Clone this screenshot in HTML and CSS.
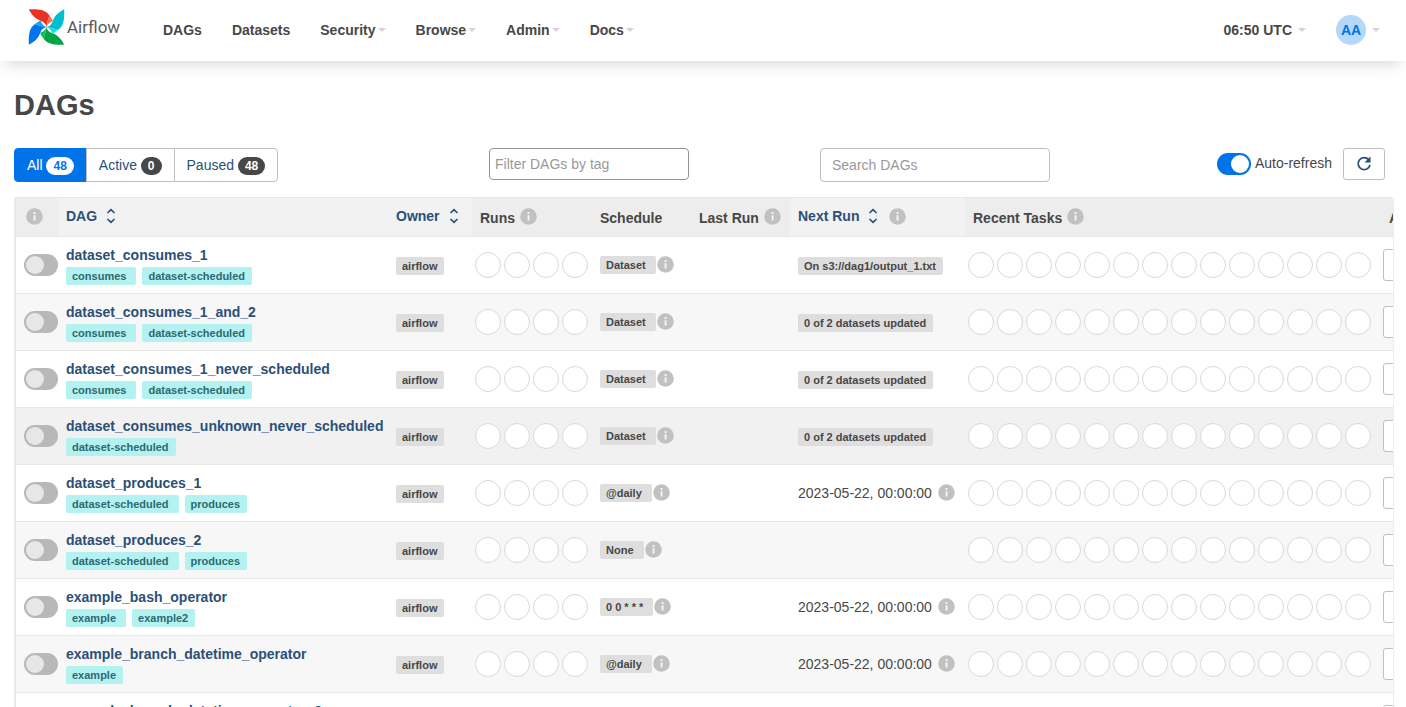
FILE: index.html
```
<!DOCTYPE html>
<html lang="en">
<head>
    <meta charset="UTF-8">
    <meta name="viewport" content="width=device-width, initial-scale=1.0">
    <title>DAGs - Airflow</title>
    <link rel="stylesheet" href="styles.css">
</head>
<body>
    <svg class="sprite" aria-hidden="true">
        <symbol id="icon-info" viewBox="0 0 17 17">
            <circle cx="8.5" cy="8.5" r="8.3" fill="#c1c1c1"/>
            <path d="M7.6 4h1.9v1.9H7.6zM7.6 7.2h1.9v5.4H7.6z" fill="#fff" opacity=".85"/>
        </symbol>
        <symbol id="icon-sort" viewBox="0 0 10 16">
            <path d="M1.5 5 5 1.6 8.5 5M1.5 11 5 14.4 8.5 11" fill="none" stroke="currentColor" stroke-width="1.7"/>
        </symbol>
    </svg>

    <header class="navbar">
        <a class="brand" href="#">
            <svg class="brand-logo" viewBox="0 0 36 36" aria-hidden="true">
                <defs>
                    <path id="blade" d="M.3.3C10 .1 17 .5 21 6.500 19.500 10 18.500 14 18 18 17.500 15 15.500 12.700 12 11.700 6.500 9.500 3.500 6.500.3.300z"/>
                    <path id="fold" d="M21 6.500C23 9 24 10.500 24.300 12.200 21 13.500 19 15 18 18 18.500 14 19.500 10 21 6.500z"/>
                </defs>
                <use href="#blade" fill="#e93124"/>
                <use href="#fold" fill="#ff7557"/>
                <use href="#blade" fill="#00bfcc" transform="rotate(90 18 18)"/>
                <use href="#fold" fill="#11dfec" transform="rotate(90 18 18)"/>
                <use href="#blade" fill="#04a346" transform="rotate(180 18 18)"/>
                <use href="#fold" fill="#00c45b" transform="rotate(180 18 18)"/>
                <use href="#blade" fill="#0073f0" transform="rotate(270 18 18)"/>
                <use href="#fold" fill="#16a3ff" transform="rotate(270 18 18)"/>
            </svg>
            <span class="brand-name">Airflow</span>
        </a>
        <nav class="menu">
            <a href="#">DAGs</a>
            <a href="#">Datasets</a>
            <a href="#">Security<b class="caret"></b></a>
            <a href="#">Browse<b class="caret"></b></a>
            <a href="#">Admin<b class="caret"></b></a>
            <a href="#">Docs<b class="caret"></b></a>
        </nav>
        <div class="menu menu-right">
            <a class="spaced" href="#">06:50 UTC<b class="caret"></b></a>
            <a class="spaced" href="#"><span class="avatar">AA</span><b class="caret"></b></a>
        </div>
    </header>

    <main>
        <h2>DAGs</h2>

        <div class="toolbar">
            <div class="status-group">
                <a class="active" href="#">All <span class="badge">48</span></a>
                <a href="#">Active <span class="badge">0</span></a>
                <a href="#">Paused <span class="badge">48</span></a>
            </div>
            <div>
                <input class="field tag-field" type="text" placeholder="Filter DAGs by tag" aria-label="Filter DAGs by tag">
            </div>
            <div class="toolbar-end">
                <input class="field search-field" type="search" placeholder="Search DAGs" aria-label="Search DAGs">
                <div class="refresh">
                    <input class="switch" type="checkbox" id="auto_refresh" checked>
                    <label for="auto_refresh">Auto-refresh</label>
                    <button class="refresh-button" type="button" aria-label="Refresh">
                        <svg width="16" height="16" viewBox="0 0 16 16" aria-hidden="true">
                            <path d="M12.700 3.700A6 6 0 1 0 14 9" fill="none" stroke="currentColor" stroke-width="1.800"/>
                            <path d="M14.500.500v6H8.500z" fill="currentColor"/>
                        </svg>
                    </button>
                </div>
            </div>
        </div>

        <div class="table-wrap">
            <table>
                <colgroup>
                    <col class="col-toggle"><col class="col-dag"><col class="col-owner">
                    <col class="col-runs"><col class="col-schedule"><col class="col-last">
                    <col class="col-next"><col class="col-tasks"><col class="col-actions">
                </colgroup>
                <thead>
                    <tr>
                        <th><div class="head toggle-head"><svg class="info"><use href="#icon-info"/></svg></div></th>
                        <th class="sortable"><div class="head"><a href="#">DAG<svg class="sort"><use href="#icon-sort"/></svg></a></div></th>
                        <th class="sortable"><div class="head"><a href="#">Owner<svg class="sort"><use href="#icon-sort"/></svg></a></div></th>
                        <th><div class="head"><span>Runs</span><svg class="info"><use href="#icon-info"/></svg></div></th>
                        <th><div class="head"><span>Schedule</span></div></th>
                        <th><div class="head"><span>Last Run</span><svg class="info"><use href="#icon-info"/></svg></div></th>
                        <th class="sortable"><div class="head"><a href="#">Next Run<svg class="sort"><use href="#icon-sort"/></svg></a><svg class="info"><use href="#icon-info"/></svg></div></th>
                        <th><div class="head"><span>Recent Tasks</span><svg class="info"><use href="#icon-info"/></svg></div></th>
                        <th class="actions-head"><div class="head"><span>Actions</span></div></th>
                    </tr>
                </thead>
                <tbody id="dags"></tbody>
            </table>
        </div>
    </main>
    <script src="dags.js"></script>
</body>
</html>
```
FILE: styles.css
```
* {
    box-sizing: border-box;
}

body {
    margin: 0;
    background: #fff;
    color: #474747;
    font-family: "Liberation Sans", Helvetica, Arial, sans-serif;
    font-size: 14px;
    line-height: 20px;
    overflow-x: hidden;
}

a {
    color: #2b5078;
    text-decoration: none;
}

.sprite {
    display: none;
}

/* Navbar */
.navbar {
    display: flex;
    height: 61px;
    padding: 0 26px 0 28px;
    background: #fff;
    box-shadow: 0 8px 16px -6px rgba(0, 0, 0, 0.18);
}

.brand {
    display: flex;
    align-items: center;
    gap: 2px;
    height: 54px;
    margin-right: 26px;
}

.brand-logo {
    width: 37px;
    height: 36px;
}

.brand-name {
    width: 55px;
    color: #5a5a5a;
    font-family: Roboto, sans-serif;
    font-size: 17px;
}

.menu {
    display: flex;
    height: 59px;
}

.menu a {
    display: flex;
    align-items: center;
    gap: 2px;
    padding: 0 15px;
    color: #474747;
    font-weight: bold;
}

.menu-right {
    margin-left: auto;
}

.menu-right a:last-child {
    padding-right: 0;
}

.menu .spaced {
    gap: 6px;
}

.caret {
    border-top: 4px solid #ddd0dd;
    border-left: 4px solid transparent;
    border-right: 4px solid transparent;
}

.avatar {
    width: 30px;
    height: 30px;
    border-radius: 50%;
    background: #b3d8f8;
    color: #0073e9;
    line-height: 30px;
    text-align: center;
}

/* Page */
main {
    padding: 0 12px 0 14px;
}

h2 {
    margin: 28px 0 26px;
    font-size: 29px;
    font-weight: bold;
    line-height: 33px;
}

.toolbar {
    display: grid;
    grid-template-columns: 475fr 331fr 565fr;
    align-items: start;
    margin: 0 9px 15px 0;
}

.toolbar-end {
    display: flex;
    justify-content: space-between;
}

.status-group {
    display: flex;
}

.status-group a {
    height: 34px;
    margin-left: -1px;
    padding: 6px 12px;
    border: 1px solid #bfbfbf;
    background: #fff;
}

.status-group a:first-child {
    margin-left: 0;
    border-radius: 4px 0 0 4px;
}

.status-group a:last-child {
    border-radius: 0 4px 4px 0;
}

.status-group .active {
    border-color: #0073e9;
    background: #0073e9;
    color: #fff;
}

.badge {
    display: inline-block;
    padding: 3px 7px;
    border-radius: 10px;
    background: #474747;
    color: #fff;
    font-size: 12px;
    font-weight: bold;
    line-height: 12px;
    vertical-align: middle;
}

.active .badge {
    background: #fff;
    color: #0073e9;
}

.field {
    border: 1px solid #bfbfbf;
    border-radius: 4px;
    background: #fff;
    color: #474747;
    font: inherit;
    appearance: none;
}

.field::placeholder {
    color: #999;
    opacity: 1;
}

.tag-field {
    width: 200px;
    height: 32px;
    padding: 0 5px;
    border-color: #949494;
}

.search-field {
    width: 230px;
    height: 34px;
    padding: 0 11px;
}

.refresh {
    display: flex;
    align-items: center;
    height: 32px;
}

.refresh label {
    margin: 0 11px 2px 4px;
}

.refresh-button {
    display: flex;
    align-items: center;
    justify-content: center;
    width: 42px;
    height: 32px;
    padding: 0;
    border: 1px solid #bfbfbf;
    border-radius: 3px;
    background: #fff;
    color: #2b5078;
}

.switch {
    display: block;
    width: 34px;
    height: 22px;
    margin: 0;
    padding: 2px;
    border-radius: 11px;
    background: #b9b8b8;
    appearance: none;
}

.switch::before {
    display: block;
    width: 18px;
    height: 18px;
    border-radius: 50%;
    background: #e8e6e8;
    content: "";
}

.switch:checked {
    background: #0073e9;
}

.switch:checked::before {
    margin-left: auto;
    background: #fff;
}

/* DAG table */
.table-wrap {
    overflow: hidden;
    border-left: 2px solid #e8e8e8;
    border-right: 1px solid #eee;
    border-radius: 3px 3px 0 0;
}

table {
    width: 1459px;
    border-collapse: separate;
    border-spacing: 0;
    table-layout: fixed;
}

.col-toggle { width: 42px; }
.col-dag { width: 330px; }
.col-owner { width: 84px; }
.col-runs { width: 120px; }
.col-schedule { width: 99px; }
.col-last { width: 99px; }
.col-next { width: 175px; }
.col-tasks { width: 410px; }
.col-actions { width: 100px; }

th {
    height: 40px;
    padding: 0 8px 2px;
    border-top: 1px solid #e8e8e8;
    border-bottom: 1px solid #e8e8e8;
    background: #ededed;
    text-align: left;
}

.sortable {
    background: #f2f2f2;
}

.actions-head {
    padding-left: 14px;
}

.head,
.head a {
    display: flex;
    align-items: center;
    white-space: nowrap;
}

.head {
    gap: 5px;
    height: 24px;
}

.toggle-head {
    justify-content: center;
    padding-right: 6px;
}

.head span {
    padding-top: 3px;
}

.head a + .info {
    margin-left: 6px;
}

.sort {
    width: 10px;
    height: 16px;
    margin-left: 9px;
}

.info {
    display: block;
    flex: none;
    width: 17px;
    height: 17px;
}

td {
    height: 57px;
    padding: 8px;
    border-bottom: 1px solid #e8e8e8;
    vertical-align: middle;
}

tbody tr:nth-child(even) {
    background: #f7f7f7;
}

tbody .hovered {
    background: #f1f1f1 !important;
}

.dag-name {
    display: block;
    font-weight: bold;
    white-space: nowrap;
}

.tags {
    display: flex;
    gap: 6px;
    margin-top: 2px;
}

.label {
    display: inline-block;
    padding: 0 7px 0 6px;
    border-radius: 2px;
    background: #dedede;
    color: #474747;
    font-size: 11px;
    font-weight: bold;
    line-height: 18px;
    white-space: nowrap;
}

.tag {
    background: #b4f1f1;
    color: #2c6a70;
}

.tag:not(:last-child),
.schedule .label {
    padding-right: 10px;
}

.schedule,
.next-run {
    display: flex;
    align-items: center;
    gap: 1px;
    padding-bottom: 1px;
    white-space: nowrap;
}

.next-run {
    gap: 6px;
}

.circles-cell {
    padding: 8px 3px;
}

.circles {
    display: flex;
    gap: 3px;
}

.circles span {
    flex: none;
    width: 26px;
    height: 26px;
    border: 1px solid #d9d9d9;
    border-radius: 50%;
    background: #fff;
}

.actions {
    display: flex;
}

.actions button {
    display: flex;
    align-items: center;
    justify-content: center;
    width: 42px;
    height: 32px;
    padding: 0;
    border: 1px solid #bfbfbf;
    border-radius: 3px 0 0 3px;
    background: #fff;
    color: #2b5078;
}

.actions button + button {
    margin-left: -1px;
    border-radius: 0 3px 3px 0;
}
```
FILE: dags.js
```
const dags = [
    { name: 'dataset_consumes_1', tags: ['consumes', 'dataset-scheduled'], schedule: 'Dataset', next: 'On s3://dag1/output_1.txt' },
    { name: 'dataset_consumes_1_and_2', tags: ['consumes', 'dataset-scheduled'], schedule: 'Dataset', next: '0 of 2 datasets updated' },
    { name: 'dataset_consumes_1_never_scheduled', tags: ['consumes', 'dataset-scheduled'], schedule: 'Dataset', next: '0 of 2 datasets updated' },
    { name: 'dataset_consumes_unknown_never_scheduled', tags: ['dataset-scheduled'], schedule: 'Dataset', next: '0 of 2 datasets updated', hovered: true },
    { name: 'dataset_produces_1', tags: ['dataset-scheduled', 'produces'], schedule: '@daily', date: '2023-05-22, 00:00:00' },
    { name: 'dataset_produces_2', tags: ['dataset-scheduled', 'produces'], schedule: 'None' },
    { name: 'example_bash_operator', tags: ['example', 'example2'], schedule: '0 0 * * *', date: '2023-05-22, 00:00:00' },
    { name: 'example_branch_datetime_operator', tags: ['example'], schedule: '@daily', date: '2023-05-22, 00:00:00' },
    { name: 'example_branch_datetime_operator_2', tags: ['example'], schedule: '@daily', date: '2023-05-22, 00:00:00' }
];

const info = '<svg class="info"><use href="#icon-info"/></svg>';

function circles(count) {
    return `<div class="circles">${'<span></span>'.repeat(count)}</div>`;
}

function nextRun(dag) {
    if (dag.date) {
        return `<div class="next-run"><time>${dag.date}</time>${info}</div>`;
    }
    return dag.next ? `<a class="label" href="#">${dag.next}</a>` : '';
}

document.getElementById('dags').innerHTML = dags.map(dag => `
    <tr class="${dag.hovered ? 'hovered' : ''}">
        <td><input class="switch" type="checkbox" aria-label="Unpause ${dag.name}"></td>
        <td>
            <a class="dag-name" href="#">${dag.name}</a>
            <div class="tags">${dag.tags.map(tag => `<a class="label tag" href="#">${tag}</a>`).join('')}</div>
        </td>
        <td><a class="label" href="#">airflow</a></td>
        <td class="circles-cell">${circles(4)}</td>
        <td><div class="schedule"><a class="label" href="#">${dag.schedule}</a>${info}</div></td>
        <td></td>
        <td>${nextRun(dag)}</td>
        <td class="circles-cell">${circles(14)}</td>
        <td>
            <div class="actions">
                <button type="button" aria-label="Trigger DAG"><svg width="12" height="12" viewBox="0 0 12 12"><path d="M2 1l9 5-9 5z" fill="currentColor"/></svg></button>
                <button type="button" aria-label="Delete DAG"><svg width="12" height="12" viewBox="0 0 12 12"><path d="M1 2h10v1H1zM2 4h8v8H2z" fill="currentColor"/></svg></button>
            </div>
        </td>
    </tr>`).join('');
```
